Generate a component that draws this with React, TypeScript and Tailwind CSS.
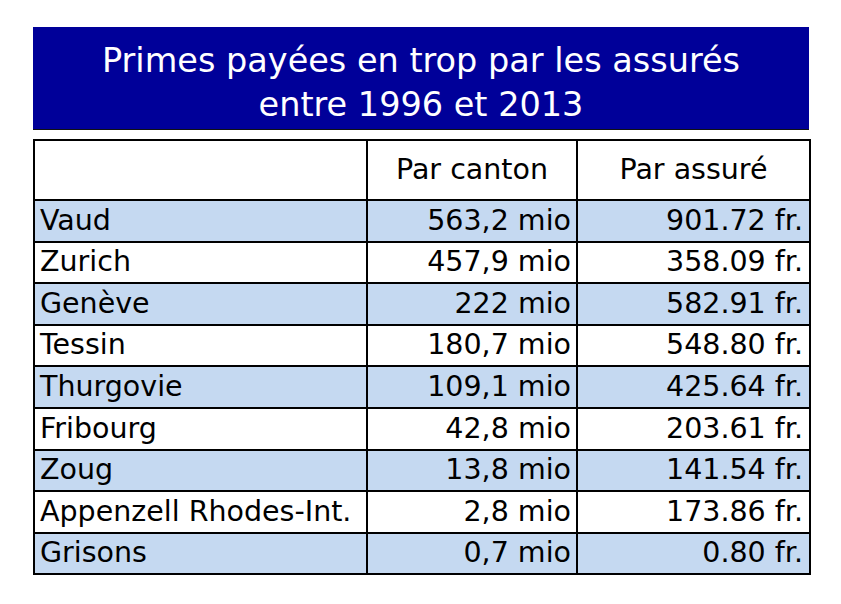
import React from 'react'

const rows: [string, string, string][] = [
  ['Vaud', '563,2 mio', '901.72 fr.'],
  ['Zurich', '457,9 mio', '358.09 fr.'],
  ['Genève', '222 mio', '582.91 fr.'],
  ['Tessin', '180,7 mio', '548.80 fr.'],
  ['Thurgovie', '109,1 mio', '425.64 fr.'],
  ['Fribourg', '42,8 mio', '203.61 fr.'],
  ['Zoug', '13,8 mio', '141.54 fr.'],
  ['Appenzell Rhodes-Int.', '2,8 mio', '173.86 fr.'],
  ['Grisons', '0,7 mio', '0.80 fr.'],
]

export default function App() {
  return (
    <div className="w-[841px] h-[604px] bg-white pt-[27px] pl-[33px] font-['DejaVu_Sans',sans-serif] text-black">
      {/* Title banner */}
      <div className="w-[776px] h-[103px] bg-[#000099] border-b border-[#111] flex flex-col items-center justify-center pt-[9px] text-white text-[33.5px] leading-[44px]">
        <div>Primes payées en trop par les assurés</div>
        <div>entre 1996 et 2013</div>
      </div>

      <table className="mt-[9px] w-[776px] border-collapse border-2 border-black table-fixed text-[28.5px]">
        <colgroup>
          <col className="w-[333px]" />
          <col className="w-[210px]" />
          <col className="w-[233px]" />
        </colgroup>
        <thead>
          <tr className="h-[60px]">
            <th className="border-2 border-black font-normal"></th>
            <th className="border-2 border-black font-normal text-center">Par canton</th>
            <th className="border-2 border-black font-normal text-center">Par assuré</th>
          </tr>
        </thead>
        <tbody>
          {rows.map(([name, canton, assure], i) => (
            <tr key={name} className={i % 2 === 0 ? 'h-[41.6px] bg-[#c5d9f1]' : 'h-[41.6px] bg-white'}>
              <td className="border-2 border-black pl-[5px] leading-none whitespace-nowrap">{name}</td>
              <td className="border-2 border-black pr-[5px] text-right leading-none whitespace-nowrap">{canton}</td>
              <td className="border-2 border-black pr-[6px] text-right leading-none whitespace-nowrap">{assure}</td>
            </tr>
          ))}
        </tbody>
      </table>
    </div>
  )
}
